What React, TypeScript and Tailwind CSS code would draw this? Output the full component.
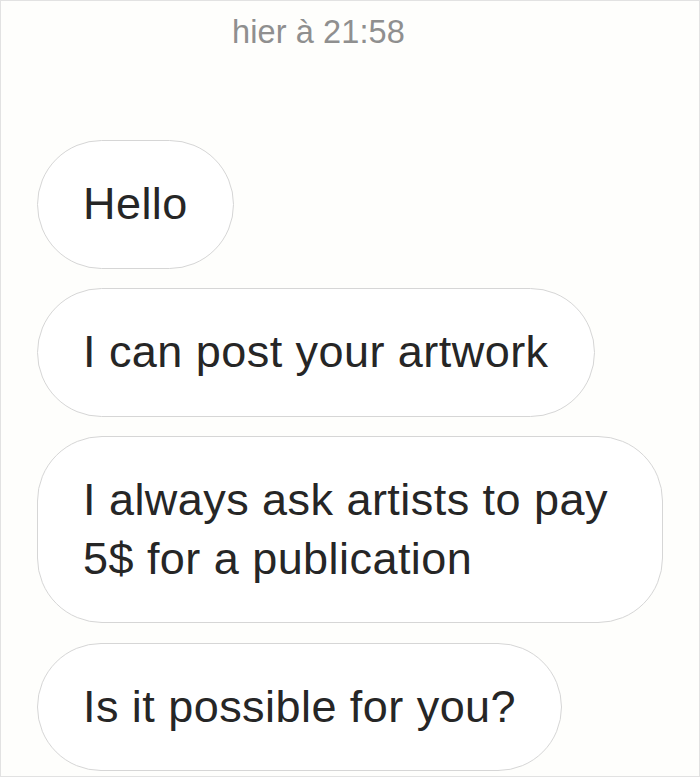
import React from "react";

const messages: string[] = [
  "Hello",
  "I can post your artwork",
  "I always ask artists to pay 5$ for a publication",
  "Is it possible for you?",
];

export default function App() {
  return (
    <div
      className="w-[700px] h-[777px] overflow-hidden border border-[#e2e2e2] bg-[#fefefc] box-border"
      style={{ fontFamily: '"Liberation Sans", Arial, sans-serif' }}
    >
      <div className="pt-[11px] pl-[231px] text-[32.5px] leading-[40px] text-[#8f8f8f] tracking-[0.1px]">
        hier à 21:58
      </div>
      <div className="mt-[88px] pl-[36px] flex flex-col items-start gap-[19.5px]">
        {messages.map((m, i) => (
          <div
            key={i}
            className="w-fit max-w-[626px] rounded-[65px] border border-[#d6d6d6] bg-white px-[45px] py-[34px] text-[45px] leading-[58.5px] tracking-[0.45px] text-[#262626]"
          >
            {m}
          </div>
        ))}
      </div>
    </div>
  );
}
